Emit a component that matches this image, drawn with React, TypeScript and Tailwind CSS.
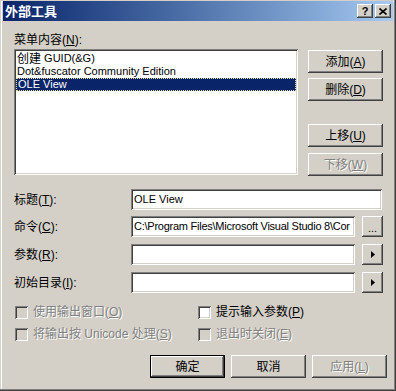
import type { ReactNode } from 'react';

const font = { fontFamily: '"Liberation Sans", "Noto Sans CJK SC", sans-serif' };

// classic 3D edges
const raised =
  'bg-[#D4D0C8] shadow-[inset_-1px_-1px_#404040,inset_1px_1px_#ffffff,inset_-2px_-2px_#808080,inset_2px_2px_#D4D0C8]';
const sunken =
  'shadow-[inset_1px_1px_#808080,inset_-1px_-1px_#ffffff,inset_2px_2px_#404040,inset_-2px_-2px_#D4D0C8]';
const disabledText = 'text-[#808080] [text-shadow:1px_1px_#ffffff]';

function Btn({ children, disabled, primary, w = 'w-[75px]' }: { children: ReactNode; disabled?: boolean; primary?: boolean; w?: string }) {
  if (primary) {
    return (
      <div className={`${w} h-[23px] border border-black flex`}>
        <div className={`${raised} flex-1 flex items-center justify-center text-[12px] text-black`}>{children}</div>
      </div>
    );
  }
  return (
    <div className={`${raised} ${w} h-[23px] flex items-center justify-center text-[12px] ${disabled ? disabledText : 'text-black'}`}>
      {children}
    </div>
  );
}

function SmallBtn({ children }: { children: ReactNode }) {
  return <div className={`${raised} w-[21px] h-[21px] flex items-center justify-center text-[11px] text-black`}>{children}</div>;
}

function Arrow() {
  return (
    <SmallBtn>
      <svg width="4" height="7" viewBox="0 0 4 7">
        <path d="M0 0 L4 3.5 L0 7 Z" fill="#000" />
      </svg>
    </SmallBtn>
  );
}

function Field({ w, children, tight }: { w: string; children?: ReactNode; tight?: boolean }) {
  return (
    <div
      className={`${sunken} ${w} h-[21px] bg-white flex items-center pl-[3px] pr-[2px] overflow-hidden whitespace-nowrap text-[11px] text-black ${tight ? 'tracking-[-0.25px]' : ''}`}
    >
      {children}
    </div>
  );
}

function Check({ label, disabled }: { label: ReactNode; disabled?: boolean }) {
  return (
    <div className="flex items-center h-[13px] gap-[5px]">
      <div className={`${sunken} w-[13px] h-[13px] ${disabled ? 'bg-[#D4D0C8]' : 'bg-white'}`} />
      <span className={`text-[12px] leading-[13px] whitespace-nowrap ${disabled ? disabledText : 'text-black'}`}>{label}</span>
    </div>
  );
}

export default function App() {
  return (
    <div
      style={font}
      className="w-[396px] h-[391px] bg-[#D4D0C8] pt-[1px] px-[3px] pb-[3px] flex flex-col shadow-[inset_-1px_-1px_#404040,inset_-2px_-2px_#808080,inset_1px_1px_#D4D0C8,inset_2px_2px_#ffffff]"
    >
      <div className="h-[20px] bg-gradient-to-r from-[#0A246A] to-[#A6CAF0] flex items-center pl-[2px] pr-[2px]">
        <span className="text-white font-bold text-[13px] leading-none">外部工具</span>
        <div className="ml-auto flex items-center gap-[2px]">
          <div className={`${raised} w-[16px] h-[14px] flex items-center justify-center text-[11px] font-bold leading-none text-black`}>?</div>
          <div className={`${raised} w-[16px] h-[14px] flex items-center justify-center`}>
            <svg width="8" height="7" viewBox="0 0 8 7">
              <path d="M0.5 0.5 L7.5 6.5 M7.5 0.5 L0.5 6.5" stroke="#000" strokeWidth="1.6" />
            </svg>
          </div>
        </div>
      </div>

      <div className="pl-[11px] flex flex-col">
        <div className="mt-[12px] text-[12px] leading-[14px] text-black">
          菜单内容(<u>N</u>):
        </div>

        <div className="flex mt-[2px]">
          <div className={`${sunken} w-[284px] h-[126px] bg-white p-[2px] pt-[3px] flex flex-col`}>
            <div className="h-[13px] pl-[1px] flex items-center text-[11px] text-black whitespace-nowrap">
              <span className="text-[12px]">创建</span>&nbsp;GUID(&amp;G)
            </div>
            <div className="h-[13px] pl-[1px] flex items-center text-[11px] text-black whitespace-nowrap">
              Dot&amp;fuscator Community Edition
            </div>
            <div className="h-[13px] pl-[1px] flex items-center text-[11px] text-white bg-[#0A246A] border border-dotted border-[#e8e0a0] whitespace-nowrap">
              OLE View
            </div>
          </div>

          <div className="ml-[10px] mt-[1px] flex flex-col">
            <Btn>
              添加(<u>A</u>)
            </Btn>
            <div className="mt-[5px]">
              <Btn>
                删除(<u>D</u>)
              </Btn>
            </div>
            <div className="mt-[23px]">
              <Btn>
                上移(<u>U</u>)
              </Btn>
            </div>
            <div className="mt-[6px]">
              <Btn disabled>
                下移(<u>W</u>)
              </Btn>
            </div>
          </div>
        </div>

        <div className="mt-[13px] flex flex-col gap-[7px]">
          <div className="flex items-center h-[21px] -mb-[1px]">
            <span className="w-[117px] text-[12px] text-black">
              标题(<u>T</u>):
            </span>
            <Field w="w-[251px]">OLE View</Field>
          </div>
          <div className="flex items-center h-[21px]">
            <span className="w-[117px] text-[12px] text-black">
              命令(<u>C</u>):
            </span>
            <Field w="w-[224px]" tight>
              C:\Program Files\Microsoft Visual Studio 8\Cor
            </Field>
            <div className="ml-[7px]">
              <SmallBtn>
                <span className="leading-none pt-[4px]">...</span>
              </SmallBtn>
            </div>
          </div>
          <div className="flex items-center h-[21px]">
            <span className="w-[117px] text-[12px] text-black">
              参数(<u>R</u>):
            </span>
            <Field w="w-[224px]" />
            <div className="ml-[7px]">
              <Arrow />
            </div>
          </div>
          <div className="flex items-center h-[21px]">
            <span className="w-[117px] text-[12px] text-black">
              初始目录(<u>I</u>):
            </span>
            <Field w="w-[224px]" />
            <div className="ml-[7px]">
              <Arrow />
            </div>
          </div>
        </div>

        <div className="mt-[13px] pl-[1px] flex flex-col gap-[9px]">
          <div className="flex">
            <div className="w-[183px]">
              <Check disabled label={<>使用输出窗口(<u>O</u>)</>} />
            </div>
            <Check label={<>提示输入参数(<u>P</u>)</>} />
          </div>
          <div className="flex">
            <div className="w-[183px]">
              <Check disabled label={<>将输出按 Unicode 处理(<u>S</u>)</>} />
            </div>
            <Check disabled label={<>退出时关闭(<u>E</u>)</>} />
          </div>
        </div>

        <div className="mt-[14px] pl-[136px] flex gap-[6px]">
          <Btn primary>确定</Btn>
          <Btn>取消</Btn>
          <Btn disabled>
            应用(<u>L</u>)
          </Btn>
        </div>
      </div>
    </div>
  );
}
